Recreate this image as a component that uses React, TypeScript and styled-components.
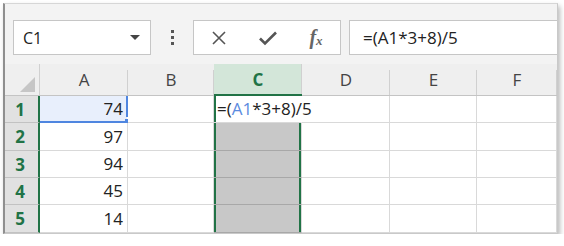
import styled, { createGlobalStyle, css } from 'styled-components';

const GlobalStyle = createGlobalStyle`
  html, body {
    margin: 0;
    padding: 0;
    background: #fff;
  }
  body {
    font-family: "Open Sans", Arial, sans-serif;
  }
`;

const GREEN = '#217346';
const GRID = '#d9d9d9';

const Frame = styled.div`
  margin: 3px 0 0 3px;
  width: 552px;
  height: 229px;
  overflow: hidden;
  background: #fff;
  border-left: 2px solid #8f8f8f;
  border-top: 1px solid #d6d6d6;
  border-right: 1px solid #c9c9c9;
  border-bottom: 1px solid #c9c9c9;
  box-shadow: 2px 3px 5px rgba(0, 0, 0, 0.28);
`;

const Toolbar = styled.div`
  display: flex;
  align-items: center;
  height: 60px;
  padding: 16px 0 9px 8px;
  box-sizing: border-box;
  background: #f3f3f3;
`;

const NameBox = styled.div`
  display: flex;
  align-items: center;
  justify-content: space-between;
  width: 138px;
  height: 35px;
  box-sizing: border-box;
  padding: 0 10px 0 9px;
  background: #fff;
  border: 1px solid #c6c6c6;
  font-size: 16px;
  color: #222;
`;

const Caret = styled.span`
  width: 0;
  height: 0;
  border-left: 5px solid transparent;
  border-right: 5px solid transparent;
  border-top: 5px solid #444;
`;

const Dots = styled.div`
  display: grid;
  gap: 3px;
  width: 42px;
  justify-items: center;

  > i {
    width: 3px;
    height: 3px;
    background: #555;
  }
`;

const Buttons = styled.div`
  display: grid;
  grid-template-columns: 50px 48px 48px;
  align-items: center;
  justify-items: center;
  width: 148px;
  height: 35px;
  box-sizing: border-box;
  background: #fff;
  border: 1px solid #c6c6c6;
  color: #555;
`;

const Fx = styled.span`
  font-family: "Liberation Serif", "Times New Roman", serif;
  font-style: italic;
  font-weight: bold;
  font-size: 20px;
  color: #666;

  > sub {
    font-size: 13px;
    vertical-align: -1px;
  }
`;

const FormulaInput = styled.div`
  flex: 1;
  height: 35px;
  margin-left: 8px;
  box-sizing: border-box;
  display: flex;
  align-items: center;
  padding-left: 13px;
  background: #fff;
  border: 1px solid #c6c6c6;
  border-right: none;
  font-size: 17px;
  color: #222;
`;

const Sheet = styled.div`
  display: grid;
  grid-template-columns: 35px 88px 86px 88px 88px 87px 1fr;
  grid-template-rows: 32px 27px 28px 27px 27px 28px;
`;

const Corner = styled.div`
  position: relative;
  background: #efefef;
  border-right: 1px solid #d0d0d0;
  border-bottom: 1px solid #c4c4c4;

  &::after {
    content: '';
    position: absolute;
    right: 4px;
    bottom: 3px;
    width: 0;
    height: 0;
    border-left: 15px solid transparent;
    border-bottom: 15px solid #c6c6c6;
  }
`;

const ColHead = styled.div<{ $active?: boolean }>`
  position: relative;
  display: flex;
  align-items: flex-end;
  justify-content: center;
  padding-bottom: 4px;
  box-sizing: border-box;
  font-size: 17px;
  color: #444;
  background: #efefef;
  border-bottom: 1px solid #c4c4c4;

  &::after {
    content: '';
    position: absolute;
    right: 0;
    top: 6px;
    bottom: 0;
    width: 1px;
    background: #d0d0d0;
  }

  ${(p) =>
    p.$active &&
    css`
      background: #d3e6d9;
      color: ${GREEN};
      font-weight: bold;
      border-bottom: 2px solid ${GREEN};
      padding-bottom: 3px;
      &::after {
        top: 0;
      }
    `}
`;

const RowHead = styled.div`
  display: flex;
  align-items: center;
  justify-content: center;
  box-sizing: border-box;
  padding-right: 3px;
  font-size: 17px;
  font-weight: bold;
  color: ${GREEN};
  background: #e1e1e1;
  border-bottom: 1px solid #c2c2c2;
  border-right: 2px solid ${GREEN};
`;

const Cell = styled.div<{ $shade?: boolean; $sel?: 'top' | 'body'; $num?: boolean; $ref?: boolean }>`
  position: relative;
  display: flex;
  align-items: center;
  justify-content: ${(p) => (p.$num ? 'flex-end' : 'flex-start')};
  box-sizing: border-box;
  padding: 0 4px 1px 3px;
  font-size: 17px;
  color: #222;
  white-space: nowrap;
  background: #fff;
  border-right: 1px solid ${GRID};
  border-bottom: 1px solid ${GRID};

  ${(p) =>
    p.$shade &&
    css`
      background: #c8c8c8;
      border-bottom: 1px solid #a8a8a8;
    `}

  ${(p) =>
    p.$sel === 'body' &&
    css`
      box-shadow: inset 2px 0 0 ${GREEN}, inset -2px 0 0 ${GREEN};
    `}

  ${(p) =>
    p.$sel === 'top' &&
    css`
      z-index: 1;
      border-right-color: transparent;
      box-shadow: inset 2px 0 0 ${GREEN};
    `}

  ${(p) =>
    p.$ref &&
    css`
      background: #e8effc;
      border-bottom: 2px solid #4f86e0;
      border-right: 1px solid #fff;
    `}
`;

const Overflow = styled.span`
  position: relative;
  z-index: 2;
  background: #fff;
`;

const RefEdge = styled.span`
  position: absolute;
  right: -1px;
  top: 3px;
  bottom: 4px;
  width: 2px;
  background: #4f86e0;
`;

const Handle = styled.span<{ $size: number; $pos: 'tr' | 'br' | 'bl' }>`
  position: absolute;
  width: ${(p) => p.$size}px;
  height: ${(p) => p.$size}px;
  background: #4f86e0;
  ${(p) => p.$pos === 'tr' && 'top: 0; right: -2px;'}
  ${(p) => p.$pos === 'br' && 'bottom: -4px; right: -4px;'}
  ${(p) => p.$pos === 'bl' && 'bottom: -3px; left: 0;'}
`;

const RefText = styled.span`
  color: #5b8be0;
`;

const cols = ['A', 'B', 'C', 'D', 'E', 'F'];
const values = ['74', '97', '94', '45', '14'];

export default function App() {
  return (
    <>
      <GlobalStyle />
      <Frame>
        <Toolbar>
          <NameBox>
            <span>C1</span>
            <Caret />
          </NameBox>
          <Dots>
            <i />
            <i />
            <i />
          </Dots>
          <Buttons>
            <svg width="16" height="16" viewBox="0 0 16 16">
              <path d="M2 2 L14 14 M14 2 L2 14" stroke="#555" strokeWidth="1.6" fill="none" />
            </svg>
            <svg width="20" height="16" viewBox="0 0 20 16">
              <path d="M2 8.5 L7 13.5 L18 2.5" stroke="#555" strokeWidth="2.6" fill="none" />
            </svg>
            <Fx>
              f<sub>x</sub>
            </Fx>
          </Buttons>
          <FormulaInput>=(A1*3+8)/5</FormulaInput>
        </Toolbar>

        <Sheet>
          <Corner />
          {cols.map((c) => (
            <ColHead key={c} $active={c === 'C'}>
              {c}
            </ColHead>
          ))}

          {values.map((v, r) => (
            <Row key={r} index={r} value={v} />
          ))}
        </Sheet>
      </Frame>
    </>
  );
}

function Row({ index, value }: { index: number; value: string }) {
  return (
    <>
      <RowHead>{index + 1}</RowHead>
      {cols.map((c) => {
        if (c === 'A') {
          return (
            <Cell key={c} $num $ref={index === 0}>
              {value}
              {index === 0 && (
                <>
                  <RefEdge />
                  <Handle $size={3} $pos="tr" />
                  <Handle $size={6} $pos="br" />
                  <Handle $size={3} $pos="bl" />
                </>
              )}
            </Cell>
          );
        }
        if (c === 'C') {
          return (
            <Cell key={c} $sel={index === 0 ? 'top' : 'body'} $shade={index > 0}>
              {index === 0 && (
                <Overflow>
                  =(<RefText>A1</RefText>*3+8)/5
                </Overflow>
              )}
            </Cell>
          );
        }
        return <Cell key={c} />;
      })}
    </>
  );
}
